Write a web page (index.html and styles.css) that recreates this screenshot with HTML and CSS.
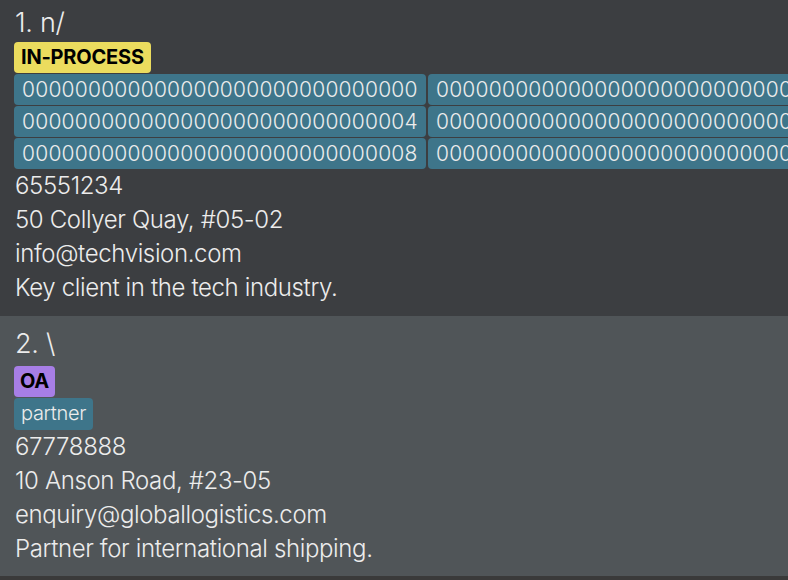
FILE: index.html
```html
<!DOCTYPE html>
<html>
<head>
<meta charset="utf-8">
<link rel="stylesheet" href="styles.css">
</head>
<body>
<div class="list">
  <div class="card card-first">
    <div class="title">1. n/</div>
    <div class="tags tags-first">
      <span class="status status-yellow">IN-PROCESS</span>
      <div class="id-grid">
        <span class="tag tag-id">000000000000000000000000000000</span>
        <span class="tag tag-id">000000000000000000000000000001</span>
        <span class="tag tag-id">000000000000000000000000000004</span>
        <span class="tag tag-id">000000000000000000000000000005</span>
        <span class="tag tag-id">000000000000000000000000000008</span>
        <span class="tag tag-id">000000000000000000000000000009</span>
      </div>
    </div>
    <div class="line">65551234</div>
    <div class="line">50 Collyer Quay, #05-02</div>
    <div class="line">info@techvision.com</div>
    <div class="line">Key client in the tech industry.</div>
  </div>
  <div class="card card-second">
    <div class="title">2. \</div>
    <div class="tags tags-second">
      <span class="status status-purple">OA</span>
      <span class="tag tag-word">partner</span>
    </div>
    <div class="line">67778888</div>
    <div class="line">10 Anson Road, #23-05</div>
    <div class="line">enquiry@globallogistics.com</div>
    <div class="line">Partner for international shipping.</div>
  </div>
</div>
</body>
</html>
```
FILE: styles.css
```css
html, body {
  margin: 0;
  padding: 0;
  background: #3a3a3a;
  overflow: hidden;
  width: 788px;
  height: 580px;
}
body {
  font-family: "Inter", "Noto Sans", sans-serif;
  color: #ececec;
}
.list {
  display: flex;
  flex-direction: column;
}
.card {
  padding: 0 0 10px 15px;
  box-sizing: border-box;
  overflow: hidden;
}
.card-first {
  background: #3c3e41;
  height: 316px;
  padding-top: 5px;
}
.card-second {
  background: #505558;
  height: 260px;
  padding-top: 10px;
}
.title {
  font-size: 27px;
  font-weight: 300;
  letter-spacing: -0.3px;
  line-height: 36px;
  height: 36px;
  white-space: nowrap;
}
.tags {
  display: flex;
  flex-direction: column;
  align-items: flex-start;
  gap: 1px;
  margin-left: -1px;
}
.tags-first {
  margin-top: 1px;
}
.tags-second {
  margin-top: 4px;
}
.status {
  display: inline-block;
  height: 31px;
  line-height: 31px;
  padding: 0 7px;
  border-radius: 4px;
  font-weight: 700;
  font-size: 20px;
  letter-spacing: -0.2px;
  color: #000000;
}
.status-yellow {
  background: #ebdc5e;
}
.status-purple {
  background: #a77ee6;
  padding: 0 6px;
}
.id-grid {
  display: grid;
  grid-template-columns: max-content max-content;
  column-gap: 2px;
  row-gap: 1px;
}
.tag {
  display: inline-block;
  background: #3e758a;
  color: #ececec;
  border-radius: 4px;
  white-space: nowrap;
  font-weight: 300;
}
.tag-id {
  height: 31px;
  line-height: 31px;
  font-size: 21px;
  letter-spacing: 0.22px;
  padding: 0 8px;
}
.tag-word {
  height: 32px;
  line-height: 31px;
  font-size: 20px;
  letter-spacing: -0.3px;
  padding: 0 7px;
}
.line {
  font-size: 24px;
  font-weight: 300;
  letter-spacing: -0.37px;
  line-height: 34px;
  height: 34px;
  white-space: nowrap;
}
```
